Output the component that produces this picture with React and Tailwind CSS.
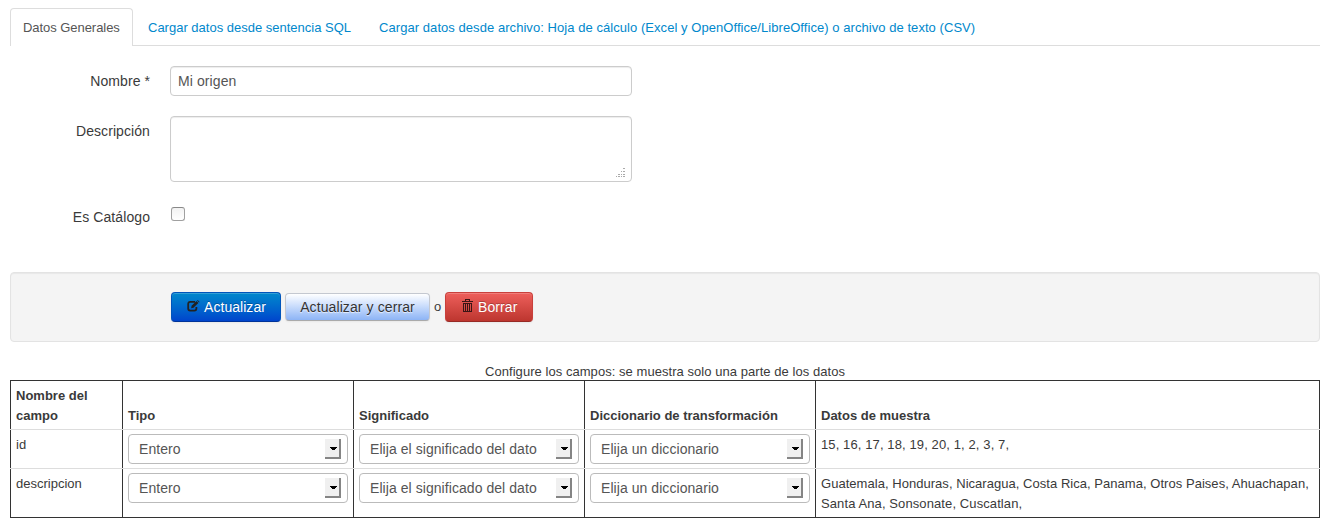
const tabs = [
  { label: 'Cargar datos desde sentencia SQL', cls: 'ml-[15px]' },
  {
    label: 'Cargar datos desde archivo: Hoja de cálculo (Excel y OpenOffice/LibreOffice) o archivo de texto (CSV)',
    cls: 'ml-7 tracking-[0.055px]',
  },
];

const headers = ['Nombre del campo', 'Tipo', 'Significado', 'Diccionario de transformación', 'Datos de muestra'];

const rows = [
  {
    name: 'id',
    sample: [{ text: '15, 16, 17, 18, 19, 20, 1, 2, 3, 7,', cls: 'tracking-[0.11px]' }],
    height: 'h-[39px]',
  },
  {
    name: 'descripcion',
    sample: [
      {
        text: 'Guatemala, Honduras, Nicaragua, Costa Rica, Panama, Otros Paises, Ahuachapan,',
        cls: 'tracking-[0.038px]',
      },
      { text: 'Santa Ana, Sonsonate, Cuscatlan,', cls: 'tracking-[0.1px]' },
    ],
    height: 'h-[49px]',
  },
];

const GRID = 'grid grid-cols-[112px_231px_231px_231px_505px]';

function Select({ value }) {
  return (
    <div className="flex h-[30px] w-[220px] items-center justify-between rounded-[4px] border border-[#bbb] bg-white pl-[10px] pr-[6px] text-[14px] leading-5 tracking-[0.06px] text-[#555]">
      <span className="whitespace-nowrap">{value}</span>
      <span className="flex h-5 w-4 items-center justify-end border-b-2 border-r-2 border-[#858585] bg-[#f0f0f0] pr-[2px]">
        <svg width="7" height="4" viewBox="0 0 7 4" shapeRendering="crispEdges">
          <path d="M0 1h7v1H6v1H5v1H2V3H1V2H0z" fill="#000" />
        </svg>
      </span>
    </div>
  );
}

function EditIcon() {
  return (
    <svg className="-mt-0.5 mr-1" width="13" height="12" viewBox="0 0 13 12" fill="none">
      <path d="M8 1.9H3.2Q1.2 1.9 1.2 3.9V8.6Q1.2 10.6 3.2 10.6H7.4Q9.4 10.6 9.4 8.6V7" stroke="#222" strokeWidth="1.8" />
      <path d="M4.1 8.3 4.6 5.8 9.5 1.1 11.4 3 6.5 7.8z" fill="#222" />
      <path d="M10.1.6 10.7 0 12.6 1.9 12 2.5z" fill="#222" />
    </svg>
  );
}

function TrashIcon() {
  return (
    <svg className="-mt-0.5 mr-[5px]" width="11" height="14" viewBox="0 0 11 14" shapeRendering="crispEdges">
      <path
        d="M3 0h5v2h3v1H0V2h3zM4 1v1h3V1zM1 4h9v9H1zM2 5v7h1V5zM4 5v7h1V5zM6 5v7h1V5zM8 5v7h1V5z"
        fill="#3a1515"
        fillRule="evenodd"
      />
    </svg>
  );
}

function Field({ label, children, className }) {
  return (
    <div className={`flex ${className}`}>
      <label className="w-[140px] shrink-0 pt-[5px] text-right text-[14px] leading-5 tracking-[0.08px]">{label}</label>
      <div className="ml-5">{children}</div>
    </div>
  );
}

export default function App() {
  return (
    <div className="h-[528px] overflow-hidden bg-white pl-[10px] pr-[11px] pt-2 font-['Liberation_Sans',Arial,sans-serif] text-[13px] leading-5 text-[#3a3a3a]">
      <nav className="flex h-[38px] border-b border-[#ddd]">
        <div className="h-[38px] w-[123px] rounded-t-[4px] border border-b-0 border-[#ddd] bg-white pl-3 pt-[9px] text-[#555]">
          <span className="whitespace-nowrap tracking-[-0.05px]">Datos Generales</span>
        </div>
        {tabs.map((t) => (
          <a key={t.label} className={`whitespace-nowrap pt-[10px] text-[#0088cc] ${t.cls}`}>
            <span>{t.label}</span>
          </a>
        ))}
      </nav>

      <form>
        <Field label="Nombre *" className="mt-5 h-[30px]">
          <div className="h-[30px] w-[462px] rounded-[4px] border border-[#ccc] px-[7px] py-1 text-[14px] leading-5 tracking-[0.1px] text-[#555] shadow-[inset_0_1px_1px_rgba(0,0,0,0.075)]">
            <span>Mi origen</span>
          </div>
        </Field>
        <Field label="Descripción" className="mt-5 h-[66px]">
          <div className="flex h-[66px] w-[462px] items-end justify-end rounded-[4px] border border-[#ccc] pb-1 pr-[6px] shadow-[inset_0_1px_1px_rgba(0,0,0,0.075)]">
            <svg width="9" height="9" viewBox="0 0 9 9" shapeRendering="crispEdges">
              <path
                d="M7 0h2v1H7zM5 3h1v1H5zM7 3h2v1H7zM2 6h2v1H2zM5 6h1v1H5zM7 6h2v1H7zM0 8h1v1H0zM2 8h2v1H2zM5 8h1v1H5zM7 8h2v1H7z"
                fill="#aaa"
              />
            </svg>
          </div>
        </Field>
        <Field label="Es Catálogo" className="mt-5 h-[30px]">
          <div className="ml-px mt-[5px] h-[14px] w-[14px] rounded-[3px] border border-[#a0a0a0] border-t-[#888] bg-gradient-to-b from-[#f2f2f2] to-white" />
        </Field>

        <div className="mt-10 flex h-[70px] items-center rounded-[4px] border border-[#e3e3e3] bg-[#f4f4f4] pl-40 shadow-[inset_0_1px_1px_rgba(0,0,0,0.05)]">
          <div className="flex h-[30px] w-[110px] items-center rounded-[4px] border border-[#0055bb] border-b-[#003399] bg-gradient-to-b from-[#0088cc] to-[#0044cc] pl-[15px] text-[14px] tracking-[0.05px] text-white shadow-[inset_0_1px_0_rgba(255,255,255,0.2),0_1px_2px_rgba(0,0,0,0.05)] [text-shadow:0_-1px_0_rgba(0,0,0,0.25)]">
            <EditIcon />
            <span>Actualizar</span>
          </div>
          <div className="ml-1 flex h-7 w-[145px] items-center justify-center rounded-[4px] border border-[#c4c8d0] border-b-[#aaa] bg-gradient-to-b from-white to-[#8db4f5] text-[14px] tracking-[0.1px] text-[#333] shadow-[inset_0_1px_0_rgba(255,255,255,0.2),0_1px_2px_rgba(0,0,0,0.05)] [text-shadow:0_1px_1px_rgba(255,255,255,0.75)]">
            <span>Actualizar y cerrar</span>
          </div>
          <span className="w-[15px] text-center">o</span>
          <div className="flex h-[30px] w-[88px] items-center rounded-[4px] border border-[#c9403c] border-b-[#972a25] bg-gradient-to-b from-[#ee5f5b] to-[#bd362f] pl-4 text-[14px] tracking-[0.1px] text-white shadow-[inset_0_1px_0_rgba(255,255,255,0.2),0_1px_2px_rgba(0,0,0,0.05)] [text-shadow:0_-1px_0_rgba(0,0,0,0.25)]">
            <TrashIcon />
            <span>Borrar</span>
          </div>
        </div>
      </form>

      <section className="mt-5" role="table">
        <div className="h-[18px] text-center leading-5 tracking-[0.05px]">
          <span>Configure los campos: se muestra solo una parte de los datos</span>
        </div>
        <div className={`${GRID} h-[49px] border-t border-[#333] font-bold`} role="row">
          {headers.map((h) => (
            <div key={h} className="flex items-end border-l border-[#333] pb-[3px] pl-[5px] last:border-r">
              <span>{h}</span>
            </div>
          ))}
        </div>
        {rows.map((r) => (
          <div key={r.name} className={`${GRID} ${r.height} border-t border-[#ddd]`} role="row">
            <div className="border-l border-[#333] pl-[5px] pt-[5px]">{r.name}</div>
            {['Entero', 'Elija el significado del dato', 'Elija un diccionario'].map((v) => (
              <div key={v} className="border-l border-[#333] pl-[5px] pt-1">
                <Select value={v} />
              </div>
            ))}
            <div className="border-x border-[#333] pl-[5px] pt-[5px]">
              {r.sample.map((s) => (
                <div key={s.text} className={`whitespace-nowrap ${s.cls}`}>
                  <span>{s.text}</span>
                </div>
              ))}
            </div>
          </div>
        ))}
        <div className="h-px bg-[#333]" />
      </section>
    </div>
  );
}
